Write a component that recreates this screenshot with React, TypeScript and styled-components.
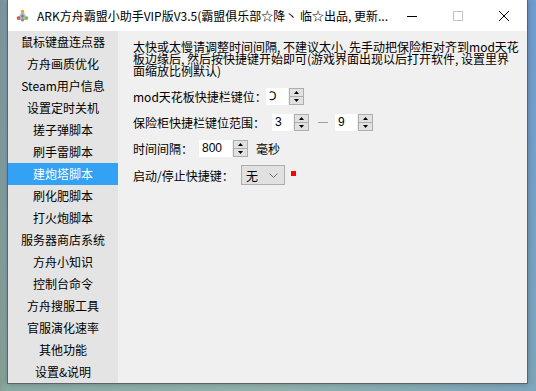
import React from "react";
import styled, { createGlobalStyle } from "styled-components";

const Global = createGlobalStyle`
  html, body { margin: 0; padding: 0; }
  body {
    width: 536px;
    height: 391px;
    overflow: hidden;
    background: linear-gradient(90deg, #7d8f86 0px, #8aa6a8 7px, #9ab3b7 50%, #6f9fd2 100%);
    font-family: "Noto Sans CJK SC", "Liberation Sans", sans-serif;
  }
`;

const Desktop = styled.div`
  width: 536px;
  height: 391px;
  box-sizing: border-box;
  padding: 0 8px 7px 7px;
  display: flex;
  background: linear-gradient(180deg, rgba(110,150,210,0.25) 0%, rgba(140,175,160,0.45) 100%);
`;

const Win = styled.div`
  flex: 1;
  display: flex;
  flex-direction: column;
  border: 1px solid #5d6266;
  border-top: none;
  background: #ffffff;
  box-shadow: 0 0 6px rgba(0,0,0,0.25);
`;

const TitleBar = styled.div`
  height: 31px;
  display: flex;
  align-items: center;
  background: #ffffff;
  flex-shrink: 0;
`;

const IconWrap = styled.div`
  width: 13px;
  height: 13px;
  margin-left: 8px;
  display: flex;
`;

const TitleText = styled.div`
  margin-left: 8px;
  font-size: 12px;
  color: #000;
  white-space: nowrap;
  flex: 1;
  overflow: hidden;
`;

const CtlBtn = styled.div`
  width: 46px;
  height: 31px;
  display: flex;
  align-items: center;
  justify-content: center;
`;

const Client = styled.div`
  flex: 1;
  display: flex;
  min-height: 0;
`;

const Sidebar = styled.div`
  width: 110px;
  background: #e4e4e4;
  display: flex;
  flex-direction: column;
  flex-shrink: 0;
`;

const NavItem = styled.div<{ $active?: boolean }>`
  height: 22px;
  line-height: 22px;
  font-size: 12px;
  text-align: center;
  white-space: nowrap;
  color: ${(p) => (p.$active ? "#ffffff" : "#000000")};
  background: ${(p) => (p.$active ? "#33a1f4" : "transparent")};
`;

const Content = styled.div`
  flex: 1;
  background: #f0f0f0;
  padding: 10px 0 0 15px;
  display: flex;
  flex-direction: column;
`;

const Para = styled.div`
  display: flex;
  flex-direction: column;
`;

const Line = styled.div`
  height: 12px;
  font-size: 12px;
  line-height: 12px;
  color: #000;
  white-space: nowrap;
`;

const Rows = styled.div`
  margin-top: 7px;
  display: flex;
  flex-direction: column;
`;

const Row = styled.div<{ $h: number }>`
  height: ${(p) => p.$h}px;
  display: flex;
  align-items: center;
`;

const Label = styled.div<{ $w: number }>`
  width: ${(p) => p.$w}px;
  flex-shrink: 0;
  font-size: 12px;
  color: #000;
  white-space: nowrap;
`;

const Edit = styled.div<{ $w: number }>`
  width: ${(p) => p.$w}px;
  height: 17px;
  background: #ffffff;
  font-size: 12px;
  line-height: 17px;
  padding-left: 3px;
  box-sizing: border-box;
  font-family: "Liberation Sans", "Noto Sans CJK SC", sans-serif;
  color: #000;
`;

const Spin = styled.div`
  width: 15px;
  height: 17px;
  margin-left: 1px;
  box-sizing: border-box;
  border: 1px solid #adadad;
  background: #e1e1e1;
  display: flex;
  flex-direction: column;
`;

const SpinHalf = styled.div<{ $top?: boolean }>`
  flex: 1;
  display: flex;
  align-items: center;
  justify-content: center;
  border-bottom: ${(p) => (p.$top ? "1px solid #adadad" : "none")};
`;

const Dash = styled.div`
  width: 10px;
  height: 1px;
  background: #a0a0a0;
  margin: 0 7px 0 9px;
`;

const Unit = styled.div`
  margin-left: 8px;
  font-size: 12px;
  color: #000;
`;

const Select = styled.div`
  width: 44px;
  height: 20px;
  box-sizing: border-box;
  border: 1px solid #adadad;
  background: #e1e1e1;
  display: flex;
  align-items: center;
  justify-content: space-between;
  padding: 0 6px 0 4px;
  font-size: 12px;
  color: #000;
`;

const RedDot = styled.div`
  width: 5px;
  height: 5px;
  background: #ff0000;
  margin: -3px 0 0 6px;
`;

const Arrow = ({ up }: { up?: boolean }) => (
  <svg width="5" height="3" viewBox="0 0 5 3">
    {up ? <path d="M2.5 0 L5 3 L0 3 Z" fill="#000" /> : <path d="M0 0 L5 0 L2.5 3 Z" fill="#000" />}
  </svg>
);

const SpinBox = ({ w, value }: { w: number; value: string }) => (
  <>
    <Edit $w={w}>{value}</Edit>
    <Spin>
      <SpinHalf $top>
        <Arrow up />
      </SpinHalf>
      <SpinHalf>
        <Arrow />
      </SpinHalf>
    </Spin>
  </>
);

const items = [
  "鼠标键盘连点器",
  "方舟画质优化",
  "Steam用户信息",
  "设置定时关机",
  "搓子弹脚本",
  "刷手雷脚本",
  "建炮塔脚本",
  "刷化肥脚本",
  "打火炮脚本",
  "服务器商店系统",
  "方舟小知识",
  "控制台命令",
  "方舟搜服工具",
  "官服演化速率",
  "其他功能",
  "设置&说明",
];

const AppIcon = () => (
  <svg width="13" height="13" viewBox="0 0 13 13">
    <path d="M6.5 1 L12 11 L1 11 Z" fill="#b9b9b9" />
    <circle cx="6.5" cy="2.5" r="1.8" fill="#e8a23a" />
    <circle cx="10.5" cy="9" r="1.8" fill="#7cc242" />
    <circle cx="2.5" cy="9" r="1.8" fill="#d9534f" />
    <circle cx="6.5" cy="11" r="1.6" fill="#8a8a8a" />
    <circle cx="6.5" cy="7" r="1.5" fill="#4a90d9" />
  </svg>
);

export default function App() {
  return (
    <>
      <Global />
      <Desktop>
        <Win>
          <TitleBar>
            <IconWrap>
              <AppIcon />
            </IconWrap>
            <TitleText>ARK方舟霸盟小助手VIP版V3.5(霸盟俱乐部☆降丶 临☆出品, 更新...</TitleText>
            <CtlBtn>
              <svg width="10" height="10" viewBox="0 0 10 10">
                <path d="M0 5.5 H10" stroke="#000" strokeWidth="1" />
              </svg>
            </CtlBtn>
            <CtlBtn>
              <svg width="10" height="10" viewBox="0 0 10 10">
                <rect x="0.5" y="0.5" width="9" height="9" fill="none" stroke="#c4c4c4" strokeWidth="1" />
              </svg>
            </CtlBtn>
            <CtlBtn>
              <svg width="10" height="10" viewBox="0 0 10 10">
                <path d="M0 0 L10 10 M10 0 L0 10" stroke="#000" strokeWidth="1" />
              </svg>
            </CtlBtn>
          </TitleBar>
          <Client>
            <Sidebar>
              {items.map((t, i) => (
                <NavItem key={t} $active={i === 6}>
                  {t}
                </NavItem>
              ))}
            </Sidebar>
            <Content>
              <Para>
                <Line>太快或太慢请调整时间间隔, 不建议太小, 先手动把保险柜对齐到mod天花</Line>
                <Line>板边缘后, 然后按快捷键开始即可(游戏界面出现以后打开软件, 设置里界</Line>
                <Line>面缩放比例默认)</Line>
              </Para>
              <Rows>
                <Row $h={25}>
                  <Label $w={133}>mod天花板快捷栏键位：</Label>
                  <SpinBox w={22} value="Ↄ" />
                </Row>
                <Row $h={26}>
                  <Label $w={139}>保险柜快捷栏键位范围：</Label>
                  <SpinBox w={21} value="3" />
                  <Dash />
                  <SpinBox w={22} value="9" />
                </Row>
                <Row $h={27}>
                  <Label $w={66}>时间间隔：</Label>
                  <SpinBox w={33} value="800" />
                  <Unit>毫秒</Unit>
                </Row>
                <Row $h={26}>
                  <Label $w={108}>启动/停止快捷键：</Label>
                  <Select>
                    <span>无</span>
                    <svg width="9" height="5" viewBox="0 0 9 5">
                      <path d="M0.5 0.5 L4.5 4.5 L8.5 0.5" fill="none" stroke="#707070" strokeWidth="1" />
                    </svg>
                  </Select>
                  <RedDot />
                </Row>
              </Rows>
            </Content>
          </Client>
        </Win>
      </Desktop>
    </>
  );
}
